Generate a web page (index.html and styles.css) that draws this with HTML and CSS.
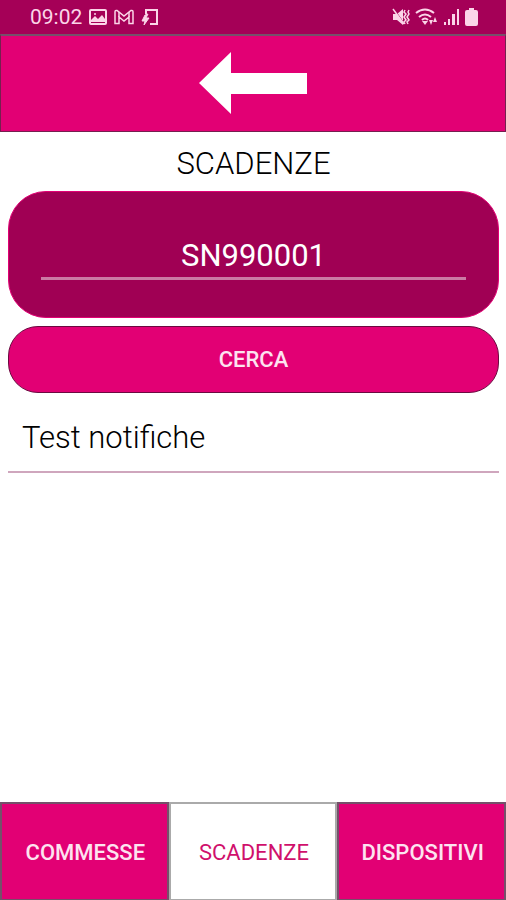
FILE: index.html
```html
<!doctype html>
<html lang="it">

<head>
    <meta charset="UTF-8">
    <meta name="viewport" content="width=device-width, initial-scale=1.0">
    <link rel="stylesheet" href="styles.css">
    <title>Scadenze</title>
</head>

<body>
    <div class="status-bar">
        <div class="status-group">
            <span class="clock">09:02</span>
            <svg width="18" height="16" viewBox="0 0 18 16">
                <rect x="1" y="1" width="16" height="14" rx="1" fill="none" stroke="currentColor" stroke-width="2" />
                <path d="M2 13V11l4-4 3 3 4-4 3 4v3z" fill="currentColor" />
                <circle cx="6" cy="5" r="1" fill="currentColor" />
            </svg>
            <svg width="20" height="16" viewBox="0 0 20 16" fill="none" stroke="currentColor">
                <path d="M1 14.500V3Q1 1 3 1.500L10 7l7-5.500Q19 1 19 3v11.500h-4V8l-5 4-5-4v6.500z" stroke-width="1.500" />
                <path d="M5 8V3M15 8V3" stroke-width="1.500" />
            </svg>
            <svg width="18" height="18" viewBox="0 0 18 18" fill="none" stroke="currentColor" stroke-width="2">
                <path d="M5 6V2h11v14H9" />
                <path d="M4 7L1 13h3l-1 4 5-7H5l2-4z" fill="currentColor" stroke-width="1" />
            </svg>
        </div>
        <div class="status-group status-right">
            <svg width="18" height="18" viewBox="0 0 18 18">
                <path d="M1 6h4l6-5v16l-6-5H1z" fill="currentColor" />
                <path d="M2 1l10 14" stroke="#a50057" stroke-width="1" />
                <path d="M1 1l11 15" stroke="currentColor" stroke-width="1.500" />
                <path d="M13 2l-1 2 2 2-2 3 2 3-2 2 1 2M17 2l-1 2 1 2-2 3 2 3-2 2 1 2" fill="none" stroke="currentColor" stroke-width="1.500" />
            </svg>
            <svg width="23" height="18" viewBox="0 0 23 18">
                <path d="M1 5Q10-2 19 5M4 9q6-5 12 0M7 12q3-3 6 0" fill="none" stroke="currentColor" stroke-width="2" />
                <path d="M7 13h6l-3 4zM14 12h4l-2 5zM18 14l2-5 2 5z" fill="currentColor" />
            </svg>
            <svg width="17" height="18" viewBox="0 0 17 18" fill="currentColor">
                <path d="M1 14h2v3H1zM5 11h2v6H5zM9 6h3v11H9zM14 1h2v16h-2z" />
            </svg>
            <svg width="13" height="18" viewBox="0 0 13 18" fill="currentColor">
                <path d="M4 0h5v2h2q2 0 2 2v12q0 2-2 2H2q-2 0-2-2V4q0-2 2-2h2z" />
            </svg>
        </div>
    </div>

    <button type="button" class="back" aria-label="Indietro">
        <svg width="108" height="64" viewBox="0 0 108 64">
            <path d="M0 31L32 0v21h76v21H32v20z" fill="#fff" />
        </svg>
    </button>

    <main>
        <h1><label for="serial">SCADENZE</label></h1>
        <form class="search">
            <div class="search-box">
                <input type="text" id="serial" value="SN990001">
            </div>
            <button type="button" class="search-button">CERCA</button>
        </form>
        <ul class="results">
            <li>Test notifiche</li>
        </ul>
    </main>

    <nav class="tabs">
        <a class="tab" href="#">COMMESSE</a>
        <a class="tab active" href="#">SCADENZE</a>
        <a class="tab" href="#">DISPOSITIVI</a>
    </nav>
</body>

</html>
```
FILE: styles.css
```css
* {
    box-sizing: border-box;
}

body {
    display: flex;
    flex-direction: column;
    min-height: 100vh;
    margin: 0;
    background-color: #fff;
    color: #000;
    font-family: Roboto, sans-serif;
}

.status-bar {
    display: flex;
    justify-content: space-between;
    height: 34px;
    padding: 0 28px 0 30px;
    background-color: #a50057;
    color: #fbd5e8;
}

.status-group {
    display: flex;
    align-items: center;
    gap: 7px;
}

.status-right {
    gap: 5px;
}

.clock {
    font-size: 21px;
}

.back {
    display: flex;
    align-items: center;
    justify-content: center;
    height: 98px;
    padding: 0;
    border: 1px solid #75204f;
    border-top: 2px solid #75506a;
    background-color: #e20074;
}

main {
    flex: 1;
    padding: 0 7px 0 8px;
}

h1 {
    margin: 0;
    padding-top: 4px;
    font-size: 31px;
    font-weight: 300;
    line-height: 55px;
    text-align: center;
}

.search {
    display: flex;
    flex-direction: column;
    gap: 8px;
}

.search-box {
    padding: 45px 32px 37px;
    border: 1px solid #e20074;
    border-radius: 38px;
    background-color: #a00054;
}

.search-box input {
    display: block;
    width: 100%;
    height: 43px;
    padding: 0 0 4px;
    border: 0;
    border-bottom: 3px solid #cb7aa4;
    background: none;
    color: #fff;
    font-family: inherit;
    font-size: 31px;
    text-align: center;
    outline: none;
}

.search-button {
    height: 67px;
    border: 1px solid #6b0a40;
    border-radius: 30px;
    background-color: #e20074;
    color: #fde3f0;
    font-family: inherit;
    font-size: 22px;
    font-weight: 500;
}

.results {
    margin: 0;
    padding: 12px 0 0;
    list-style: none;
}

.results li {
    padding: 0 14px;
    border-bottom: 2px solid #cfa6bd;
    font-size: 31px;
    font-weight: 300;
    line-height: 66px;
}

.tabs {
    display: grid;
    grid-template-columns: repeat(3, 1fr);
    height: 98px;
}

.tab {
    display: flex;
    align-items: center;
    justify-content: center;
    padding: 2px 0 0 2px;
    border: 2px solid #75506a;
    border-bottom-width: 1px;
    background-color: #e20074;
    color: #fde3f0;
    font-size: 22px;
    font-weight: 500;
    text-decoration: none;
}

.tab.active {
    border-color: #aaa;
    background-color: #fff;
    color: #d0106c;
    font-weight: 400;
}
```
